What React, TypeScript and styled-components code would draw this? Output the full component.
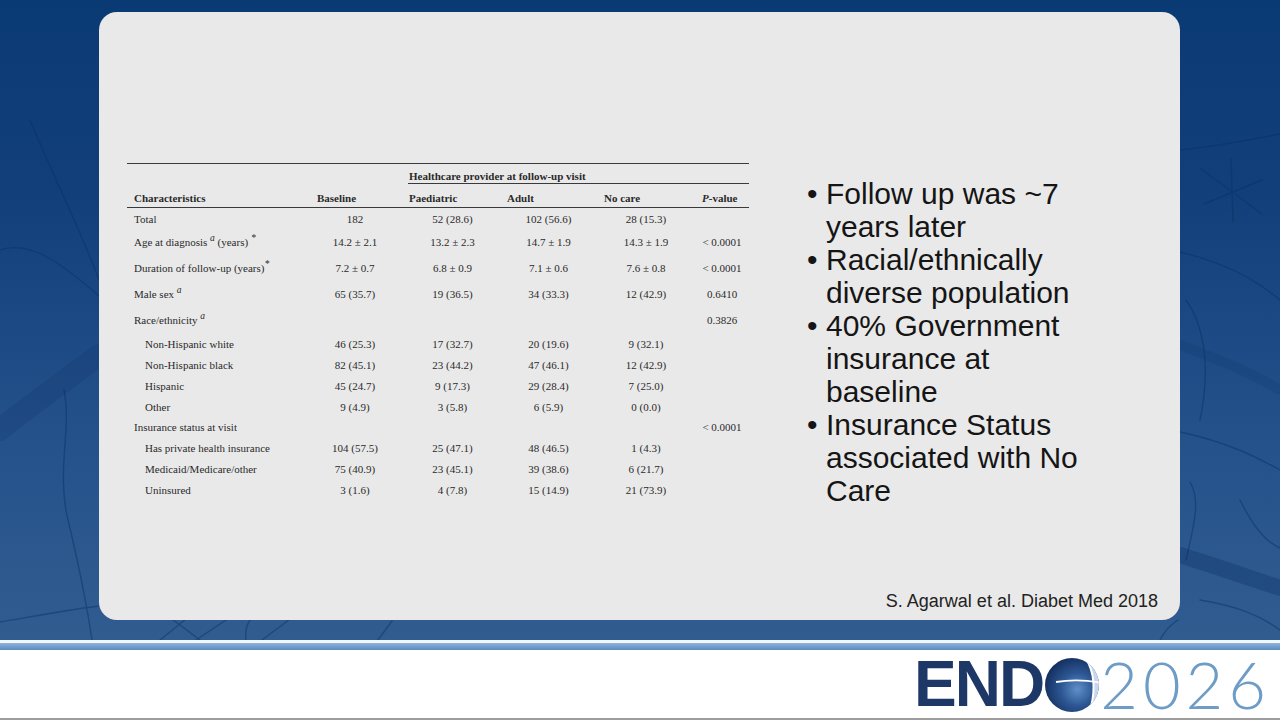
import React from "react";
import styled, { createGlobalStyle } from "styled-components";

const GlobalStyle = createGlobalStyle`
  html, body {
    margin: 0;
    padding: 0;
  }
  body {
    width: 1280px;
    height: 720px;
    overflow: hidden;
    background: #ffffff;
    font-family: "Liberation Sans", Arial, sans-serif;
  }
`;

const Page = styled.div`
  width: 1280px;
  height: 720px;
  display: flex;
  flex-direction: column;
`;

const Stage = styled.div`
  position: relative;
  flex: none;
  height: 640px;
  box-sizing: border-box;
  padding: 12px 100px 20px 99px;
  overflow: hidden;
  background: linear-gradient(
    180deg,
    #0a3a74 0%,
    #123f7a 30%,
    #25528b 70%,
    #305c90 100%
  );
`;

const Veins = styled.svg`
  position: absolute;
  inset: 0;
  width: 1280px;
  height: 640px;
  pointer-events: none;
`;

const Card = styled.div`
  position: relative;
  z-index: 1;
  height: 100%;
  box-sizing: border-box;
  background: #e9e9e9;
  border-radius: 18px;
  display: grid;
  grid-template-columns: 650px 1fr;
  grid-template-rows: 1fr auto;
`;

const TableArea = styled.div`
  padding: 151px 0 0 28px;
`;

const DataTable = styled.table`
  width: 622px;
  border-collapse: collapse;
  table-layout: fixed;
  font-family: "Liberation Serif", "Times New Roman", serif;
  font-size: 11px;
  line-height: 14px;
  color: #2a2a2a;
  border-top: 1.5px solid #3a3a3a;
`;

const GroupCell = styled.td`
  padding: 5px 0 0 0;
`;

const GroupLabel = styled.div`
  margin-left: 3px;
  padding-left: 1px;
  font-weight: bold;
  border-bottom: 1px solid #3a3a3a;
`;

const HeadCell = styled.th<{ $indent: number }>`
  padding: 7px 0 2px ${(p) => p.$indent}px;
  text-align: left;
  font-weight: bold;
  white-space: nowrap;
  border-bottom: 1.5px solid #3a3a3a;
`;

const Row = styled.tr<{ $h: number }>`
  height: ${(p) => p.$h}px;
`;

const LabelCell = styled.td<{ $sub?: boolean }>`
  padding: 1px 0 0 ${(p) => (p.$sub ? 18 : 7)}px;
  vertical-align: middle;
  white-space: nowrap;
`;

const ValueCell = styled.td`
  padding: 1px 0 0 0;
  text-align: center;
  vertical-align: middle;
  white-space: nowrap;
`;

const Sup = styled.sup`
  font-size: 9.5px;
  font-style: italic;
  line-height: 0;
  vertical-align: 5px;
`;

const BulletArea = styled.div`
  padding: 165px 0 0 57px;
`;

const Bullets = styled.ul`
  list-style: none;
  margin: 0;
  padding: 0;
  width: 285px;
  font-size: 30px;
  line-height: 33px;
  color: #151515;
`;

const Bullet = styled.li`
  display: grid;
  grid-template-columns: 20px 1fr;
`;

const Dot = styled.span`
  padding-left: 1px;
`;

const Citation = styled.div`
  grid-column: 1 / -1;
  justify-self: end;
  padding: 0 22px 9px 0;
  font-size: 18px;
  line-height: 20px;
  color: #222222;
`;

const WhiteRule = styled.div`
  height: 3px;
  background: #f4f8fc;
`;

const BlueBand = styled.div`
  height: 7px;
  background: linear-gradient(180deg, #8fb5dc 0%, #6e9bcb 60%, #5d8bbd 100%);
`;

const Footer = styled.div`
  flex: 1;
  display: flex;
  align-items: center;
  justify-content: flex-end;
  padding-right: 9px;
  background: #ffffff;
  border-bottom: 2px solid #9c9c9c;
`;

const LogoBold = styled.span`
  font-family: "Liberation Sans", Arial, sans-serif;
  font-weight: bold;
  font-size: 64px;
  line-height: 64px;
  letter-spacing: -2px;
  color: #1d3767;
`;

const LogoThin = styled.span`
  font-family: Lato, "Open Sans", sans-serif;
  font-weight: 300;
  font-size: 65px;
  line-height: 64px;
  letter-spacing: 5px;
  color: #6d9cc6;
`;

const Globe = styled.svg`
  flex: none;
  margin: 2px 0 0 1px;
`;

type DataRow = {
  label: React.ReactNode;
  values: string[];
  h: number;
  sub?: boolean;
};

const rows: DataRow[] = [
  { label: "Total", values: ["182", "52 (28.6)", "102 (56.6)", "28 (15.3)", ""], h: 21 },
  {
    label: (
      <>
        Age at diagnosis <Sup>a</Sup> (years) <Sup>*</Sup>
      </>
    ),
    values: ["14.2 ± 2.1", "13.2 ± 2.3", "14.7 ± 1.9", "14.3 ± 1.9", "< 0.0001"],
    h: 26,
  },
  {
    label: (
      <>
        Duration of follow-up (years)<Sup>*</Sup>
      </>
    ),
    values: ["7.2 ± 0.7", "6.8 ± 0.9", "7.1 ± 0.6", "7.6 ± 0.8", "< 0.0001"],
    h: 26,
  },
  {
    label: (
      <>
        Male sex <Sup>a</Sup>
      </>
    ),
    values: ["65 (35.7)", "19 (36.5)", "34 (33.3)", "12 (42.9)", "0.6410"],
    h: 26,
  },
  {
    label: (
      <>
        Race/ethnicity <Sup>a</Sup>
      </>
    ),
    values: ["", "", "", "", "0.3826"],
    h: 25,
  },
  { label: "Non-Hispanic white", values: ["46 (25.3)", "17 (32.7)", "20 (19.6)", "9 (32.1)", ""], h: 23, sub: true },
  { label: "Non-Hispanic black", values: ["82 (45.1)", "23 (44.2)", "47 (46.1)", "12 (42.9)", ""], h: 20.5, sub: true },
  { label: "Hispanic", values: ["45 (24.7)", "9 (17.3)", "29 (28.4)", "7 (25.0)", ""], h: 20.5, sub: true },
  { label: "Other", values: ["9 (4.9)", "3 (5.8)", "6 (5.9)", "0 (0.0)", ""], h: 21, sub: true },
  { label: "Insurance status at visit", values: ["", "", "", "", "< 0.0001"], h: 20.5 },
  { label: "Has private health insurance", values: ["104 (57.5)", "25 (47.1)", "48 (46.5)", "1 (4.3)", ""], h: 20.5, sub: true },
  { label: "Medicaid/Medicare/other", values: ["75 (40.9)", "23 (45.1)", "39 (38.6)", "6 (21.7)", ""], h: 21, sub: true },
  { label: "Uninsured", values: ["3 (1.6)", "4 (7.8)", "15 (14.9)", "21 (73.9)", ""], h: 21, sub: true },
];

const columns = [
  { title: <>Characteristics</>, width: 178, indent: 7 },
  { title: <>Baseline</>, width: 100, indent: 12 },
  { title: <>Paediatric</>, width: 95, indent: 4 },
  { title: <>Adult</>, width: 97, indent: 7 },
  { title: <>No care</>, width: 98, indent: 7 },
  { title: <><i>P</i>-value</>, width: 54, indent: 7 },
];

const points = [
  "Follow up was ~7 years later",
  "Racial/ethnically diverse population",
  "40% Government insurance at baseline",
  "Insurance Status associated with No Care",
];

function Background() {
  return (
    <Veins viewBox="0 0 1280 640">
      <g fill="none" stroke="#0a2f62" strokeLinecap="round">
        <path d="M0 430 C 30 405, 60 385, 99 355" strokeWidth="22" opacity="0.18" />
        <path d="M1180 555 C 1215 566, 1250 578, 1280 588" strokeWidth="16" opacity="0.32" />
        <path d="M1180 345 C 1220 360, 1250 372, 1280 390" strokeWidth="10" opacity="0.15" />
        <g strokeWidth="1.4" opacity="0.45">
          <path d="M0 250 C 30 240, 60 262, 99 296" />
          <path d="M30 120 C 55 180, 85 240, 99 280" />
          <path d="M64 390 C 72 430, 56 470, 68 520 S 86 600, 92 640" />
          <path d="M0 622 C 30 617, 60 611, 99 606" />
          <path d="M160 640 L 186 619" />
          <path d="M172 619 L 200 640" />
          <path d="M196 640 L 232 616" />
          <path d="M246 640 C 245 632, 246 626, 250 620" />
          <path d="M262 640 L 290 619" />
          <path d="M378 640 L 392 621" />
          <path d="M1160 640 C 1165 630, 1170 625, 1178 620" />
          <path d="M1180 150 C 1220 146, 1250 140, 1280 134" />
          <path d="M1200 168 L 1262 214" />
          <path d="M1231 158 L 1233 222" />
          <path d="M1204 204 L 1262 180" />
          <path d="M1180 252 C 1220 262, 1250 275, 1280 300" />
          <path d="M1186 300 C 1202 322, 1212 362, 1200 420" />
          <path d="M1180 432 C 1228 442, 1258 458, 1280 470" />
          <path d="M1190 482 C 1202 502, 1192 532, 1186 560" />
          <path d="M1240 500 C 1250 520, 1262 540, 1280 548" />
          <path d="M1200 600 C 1230 605, 1255 612, 1280 630" />
        </g>
      </g>
    </Veins>
  );
}

function GlobeMark() {
  return (
    <Globe width="56" height="56" viewBox="0 0 56 56">
      <defs>
        <radialGradient id="globeFill" cx="0.6" cy="0.58" r="0.62">
          <stop offset="0" stopColor="#5f8fc8" />
          <stop offset="0.5" stopColor="#2c5693" />
          <stop offset="1" stopColor="#142f5e" />
        </radialGradient>
        <clipPath id="globeClip">
          <circle cx="28" cy="28" r="27" />
        </clipPath>
      </defs>
      <circle cx="28" cy="28" r="27" fill="url(#globeFill)" />
      <g clipPath="url(#globeClip)">
        <path d="M41 1 C 51 14, 52 36, 45 56 L 56 56 L 56 0 Z" fill="#c9d8ea" />
        <path d="M41 1 C 51 14, 52 36, 45 56" stroke="#ffffff" strokeWidth="2" fill="none" />
        <path d="M12 25 C 26 22.5, 42 23, 56 25.5" stroke="#ffffff" strokeWidth="1.8" fill="none" />
      </g>
    </Globe>
  );
}

export default function App() {
  return (
    <>
      <GlobalStyle />
      <Page>
        <Stage>
          <Background />
          <Card>
            <TableArea>
              <DataTable>
                <colgroup>
                  {columns.map((c, i) => (
                    <col key={i} style={{ width: c.width }} />
                  ))}
                </colgroup>
                <thead>
                  <tr>
                    <td colSpan={2} />
                    <GroupCell colSpan={4}>
                      <GroupLabel>Healthcare provider at follow-up visit</GroupLabel>
                    </GroupCell>
                  </tr>
                  <tr>
                    {columns.map((c, i) => (
                      <HeadCell key={i} $indent={c.indent}>
                        {c.title}
                      </HeadCell>
                    ))}
                  </tr>
                </thead>
                <tbody>
                  {rows.map((r, i) => (
                    <Row key={i} $h={r.h}>
                      <LabelCell $sub={r.sub}>{r.label}</LabelCell>
                      {r.values.map((v, j) => (
                        <ValueCell key={j}>{v}</ValueCell>
                      ))}
                    </Row>
                  ))}
                </tbody>
              </DataTable>
            </TableArea>
            <BulletArea>
              <Bullets>
                {points.map((p) => (
                  <Bullet key={p}>
                    <Dot>•</Dot>
                    <span>{p}</span>
                  </Bullet>
                ))}
              </Bullets>
            </BulletArea>
            <Citation>S. Agarwal et al. Diabet Med 2018</Citation>
          </Card>
        </Stage>
        <WhiteRule />
        <BlueBand />
        <Footer>
          <LogoBold>END</LogoBold>
          <GlobeMark />
          <LogoThin>2026</LogoThin>
        </Footer>
      </Page>
    </>
  );
}
